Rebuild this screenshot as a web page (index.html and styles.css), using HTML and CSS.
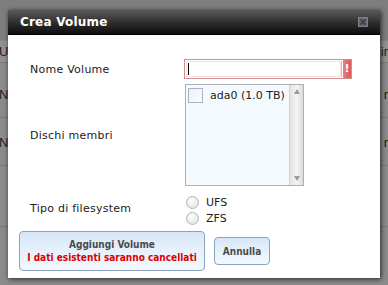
FILE: index.html
```html
<!DOCTYPE html>
<html lang="it">
<head>
    <meta charset="UTF-8">
    <meta name="viewport" content="width=device-width, initial-scale=1.0">
    <title>Crea Volume</title>
    <link rel="stylesheet" href="styles.css">
</head>
<body>
    <div class="page">
        <div class="page-top"></div>
        <div class="row row-head"><span>U</span><span>ir</span></div>
        <div class="row row-a"><span>N</span><span>r</span></div>
        <div class="row row-b"><span>N</span><span>r</span></div>
        <div class="row row-c"><span></span><span></span></div>
    </div>

    <div class="dialog">
        <div class="dialog-title">
            <span>Crea Volume</span>
            <span class="close">
                <svg width="10" height="10" viewBox="0 0 10 10">
                    <rect x="0.5" y="0.5" width="9" height="9" fill="#6e737a" stroke="#8a9098"/>
                    <path d="M2.5 2.5 L7.5 7.5 M7.5 2.5 L2.5 7.5" stroke="#3c4047" stroke-width="1.6"/>
                </svg>
            </span>
        </div>
        <div class="dialog-body">
            <form class="form-grid">
                <label for="volume_name">Nome Volume</label>
                <div class="field-input">
                    <span class="caret"></span>
                    <input type="text" id="volume_name">
                    <span class="error-mark">!</span>
                </div>

                <label>Dischi membri</label>
                <div class="listbox">
                    <div class="list-items">
                        <div class="list-item"><span class="check"></span>ada0 (1.0 TB)</div>
                    </div>
                    <div class="scrollbar">
                        <span class="arrow up"></span>
                        <span class="arrow down"></span>
                    </div>
                </div>

                <label>Tipo di filesystem</label>
                <div class="radios">
                    <div class="radio-row"><span class="radio"></span>UFS</div>
                    <div class="radio-row"><span class="radio"></span>ZFS</div>
                </div>
            </form>
            <div class="buttons">
                <button type="button" class="btn btn-add">Aggiungi Volume<br><span class="warn">I dati esistenti saranno cancellati</span></button>
                <button type="button" class="btn btn-cancel">Annulla</button>
            </div>
        </div>
    </div>
</body>
</html>
```

FILE: styles.css
```css
body {
    margin: 0;
    width: 388px;
    height: 285px;
    overflow: hidden;
    background-color: #8b8b8b;
    font-family: "DejaVu Sans", Verdana, sans-serif;
    font-size: 11px;
    color: #222;
}
.page {
    height: 285px;
}
.page-top {
    height: 40px;
    background-color: #7e7e7e;
    border-bottom: 1px solid #858585;
}
.row {
    display: flex;
    justify-content: space-between;
    margin-left: -1px;
    border-bottom: 1px solid #7a7a7a;
    font-family: "Liberation Sans", Arial, sans-serif;
    font-size: 13px;
    color: #1e1e1e;
}
.row span {
    display: block;
}
.row-head {
    height: 21px;
    line-height: 21px;
    background-color: #929292;
}
.row-a {
    height: 54px;
    line-height: 64px;
}
.row-b {
    height: 47px;
    line-height: 50px;
}
.row-c {
    height: 60px;
}
.dialog {
    position: absolute;
    left: 8px;
    top: 10px;
    width: 372px;
    height: 268px;
    background: #fff;
    box-shadow: 1px 1px 5px rgba(0, 0, 0, 0.75);
}
.dialog-title {
    height: 24px;
    display: flex;
    align-items: center;
    justify-content: space-between;
    padding: 0 12px 0 12px;
    background: linear-gradient(#5a5a5a, #2c2c2c 55%, #0e0e0e);
    border-bottom: 1px solid #000;
    color: #fff;
    font-weight: bold;
    font-size: 12px;
    letter-spacing: 0.2px;
}
.close {
    display: flex;
    opacity: 0.85;
}
.dialog-body {
    padding-top: 24px;
}
.form-grid {
    display: grid;
    grid-template-columns: 154px 168px;
    row-gap: 5px;
    align-items: center;
    margin-left: 22px;
}
.form-grid label {
    color: #222;
    letter-spacing: 0.25px;
}
.field-input {
    position: relative;
    display: flex;
    height: 20px;
    border: 1px solid #d58e8e;
    box-sizing: border-box;
    background: #fff;
}
.caret {
    position: absolute;
    left: 3px;
    top: 3px;
    width: 1px;
    height: 12px;
    background: #000;
}
.field-input input {
    flex: 1;
    border: none;
    border-right: 1px solid #e3b4b4;
    margin: 1px;
    padding: 0 2px;
    font: inherit;
    outline: none;
    background: #fff;
    box-shadow: inset 0 0 0 1px #f2e0e0;
}
.error-mark {
    width: 8px;
    background: linear-gradient(90deg, #e88080, #d65a5a);
    color: #fff;
    font-weight: bold;
    font-size: 11px;
    line-height: 18px;
    text-align: center;
}
.listbox {
    display: flex;
    width: 119px;
    height: 102px;
    box-sizing: border-box;
    border: 1px solid #a9b0b8;
    background: #f5faff;
    margin-left: 1px;
}
.list-items {
    flex: 1;
    padding: 3px 2px;
}
.list-item {
    display: flex;
    align-items: center;
    gap: 7px;
    height: 15px;
}
.check {
    width: 13px;
    height: 13px;
    border: 1px solid #a7b3c1;
    background: linear-gradient(135deg, #eaf0f6, #fbfdff);
}
.scrollbar {
    width: 13px;
    display: flex;
    flex-direction: column;
    justify-content: space-between;
    align-items: center;
    padding: 4px 0;
    background: linear-gradient(90deg, #e3e3e3, #f4f4f4 50%, #dcdcdc);
    border-left: 1px solid #d0d0d0;
}
.arrow {
    width: 0;
    height: 0;
    border-left: 3px solid transparent;
    border-right: 3px solid transparent;
}
.arrow.up {
    border-bottom: 5px solid #9a9a9a;
}
.arrow.down {
    border-top: 5px solid #9a9a9a;
}
.radios {
    padding: 3px 0 0 2px;
}
.radio-row {
    display: flex;
    align-items: center;
    gap: 7px;
    height: 16px;
}
.radio {
    width: 11px;
    height: 11px;
    border-radius: 50%;
    border: 1px solid #b5b5b5;
    background: radial-gradient(circle at 40% 35%, #fdfdfd, #e0e0e0);
}
.buttons {
    display: flex;
    align-items: center;
    gap: 9px;
    margin: 5px 0 0 11px;
}
.btn {
    border: 1px solid #8aa2bd;
    border-radius: 4px;
    background: linear-gradient(#d6e6f7, #eaf3fc 60%, #f1f7fd);
    font-family: "DejaVu Sans Condensed", "DejaVu Sans", sans-serif;
    font-weight: bold;
    font-size: 10px;
    color: #4a4a4a;
    padding: 0;
    line-height: 13px;
}
.btn-add {
    width: 186px;
    height: 40px;
}
.warn {
    color: #dd0000;
}
.btn-cancel {
    width: 56px;
    height: 28px;
}
```
